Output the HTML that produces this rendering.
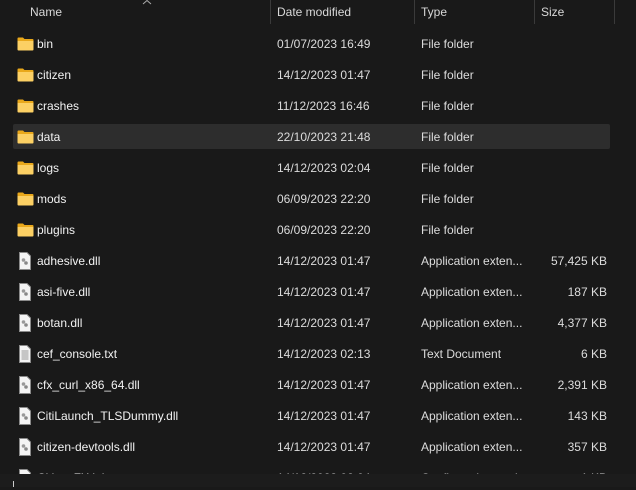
<!DOCTYPE html>
<html><head><style>
html,body{margin:0;padding:0;background:#191919;width:636px;height:487px;overflow:hidden;font-family:"Liberation Sans",sans-serif;font-size:12px;color:#dcdcdc}
.h{position:absolute;top:5px;color:#d8d8d8}
.sep{position:absolute;top:0;width:1px;height:24px;background:#3a3a3a}
.row{position:absolute;left:0;width:636px;height:24px}
.row span{position:absolute;top:5px;white-space:nowrap}
.n{left:37px;color:#f2f2f2}
.d{left:277px}
.t{left:421px}
.s{right:29px}
.sel{position:absolute;left:13px;width:597px;height:25px;top:124px;background:#2d2d2d;border-radius:2px}
.ic{position:absolute;left:17px;top:5px}
</style></head><body>
<div class="h" style="left:30px">Name</div>
<svg style="position:absolute;left:142px;top:0" width="10" height="5"><path d="M1 4L5 0.5L9 4" stroke="#aaa" fill="none"/></svg>
<div class="sep" style="left:270px"></div><div class="h" style="left:277px">Date modified</div>
<div class="sep" style="left:414px"></div><div class="h" style="left:421px">Type</div>
<div class="sep" style="left:534px"></div><div class="h" style="left:541px">Size</div>
<div class="sep" style="left:614px"></div>
<div class="sel"></div>
<div id="rows"></div>
<script>
const F='<svg class="ic" width="17" height="14" viewBox="0 0 17 14"><path d="M0.5 1.5Q0.5 0.5 1.5 0.5H6L7.5 2H15.5Q16.5 2 16.5 3V4H0.5Z" fill="#e9a81b"/><path d="M0.5 4H16.5V12.5Q16.5 13.5 15.5 13.5H1.5Q0.5 13.5 0.5 12.5Z" fill="#fcd064"/></svg>';
const D='<svg class="ic" style="left:19px;top:3px" width="12" height="18" viewBox="0 0 12 18"><path d="M0.5 0.5H8L11.5 4V17.5H0.5Z" fill="#f4f4f4" stroke="#8a8a8a"/><circle cx="4.5" cy="8" r="1.8" fill="#999"/><circle cx="7" cy="11" r="1.8" fill="#888"/></svg>';
const T='<svg class="ic" style="left:19px;top:3px" width="12" height="18" viewBox="0 0 12 18"><path d="M0.5 0.5H8L11.5 4V17.5H0.5Z" fill="#f4f4f4" stroke="#8a8a8a"/><path d="M2.5 6H9.5M2.5 8H9.5M2.5 10H9.5M2.5 12H9.5M2.5 14H9.5" stroke="#999"/></svg>';
const r=[
[F,'bin','01/07/2023 16:49','File folder',''],
[F,'citizen','14/12/2023 01:47','File folder',''],
[F,'crashes','11/12/2023 16:46','File folder',''],
[F,'data','22/10/2023 21:48','File folder',''],
[F,'logs','14/12/2023 02:04','File folder',''],
[F,'mods','06/09/2023 22:20','File folder',''],
[F,'plugins','06/09/2023 22:20','File folder',''],
[D,'adhesive.dll','14/12/2023 01:47','Application exten...','57,425 KB'],
[D,'asi-five.dll','14/12/2023 01:47','Application exten...','187 KB'],
[D,'botan.dll','14/12/2023 01:47','Application exten...','4,377 KB'],
[T,'cef_console.txt','14/12/2023 02:13','Text Document','6 KB'],
[D,'cfx_curl_x86_64.dll','14/12/2023 01:47','Application exten...','2,391 KB'],
[D,'CitiLaunch_TLSDummy.dll','14/12/2023 01:47','Application exten...','143 KB'],
[D,'citizen-devtools.dll','14/12/2023 01:47','Application exten...','357 KB'],
[T,'CitizenFX.ini','14/12/2023 02:04','Configuration setti...','1 KB']];
let h='';r.forEach((x,i)=>{h+=`<div class="row" style="top:${32+i*31}px">${x[0]}<span class="n">${x[1]}</span><span class="d">${x[2]}</span><span class="t">${x[3]}</span><span class="s">${x[4]}</span></div>`});
document.getElementById('rows').innerHTML=h;
</script>
<div style="position:absolute;left:0;top:474px;width:636px;height:13px;background:#1c1c1c"></div>
<div style="position:absolute;left:13px;top:481px;width:1px;height:6px;background:#ccc"></div>
</body></html>
